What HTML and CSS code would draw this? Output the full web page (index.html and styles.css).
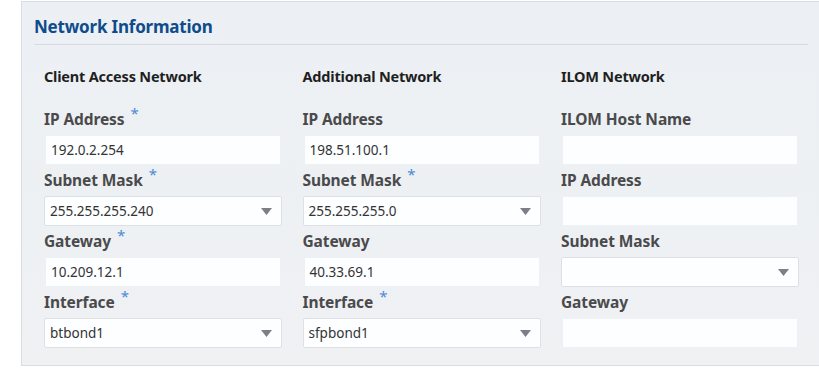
FILE: index.html
```html
<!DOCTYPE html>
<html>
<head>
<meta charset="utf-8">
<link rel="stylesheet" href="styles.css">
</head>
<body>
<section class="panel">
  <h2 class="panel-title">Network Information</h2>
  <div class="columns">
    <div class="col">
      <h3 class="col-title">Client Access Network</h3>
      <div class="field"><label class="lbl">IP Address<span class="req">*</span></label><div class="input">192.0.2.254</div></div>
      <div class="field"><label class="lbl">Subnet Mask<span class="req">*</span></label><div class="select"><span>255.255.255.240</span><svg class="arrow" width="11" height="7" viewBox="0 0 11 7"><path d="M0 0H11L5.5 7Z"/></svg></div></div>
      <div class="field"><label class="lbl">Gateway<span class="req">*</span></label><div class="input">10.209.12.1</div></div>
      <div class="field"><label class="lbl">Interface<span class="req">*</span></label><div class="select"><span>btbond1</span><svg class="arrow" width="11" height="7" viewBox="0 0 11 7"><path d="M0 0H11L5.5 7Z"/></svg></div></div>
    </div>
    <div class="col">
      <h3 class="col-title">Additional Network</h3>
      <div class="field"><label class="lbl">IP Address</label><div class="input">198.51.100.1</div></div>
      <div class="field"><label class="lbl">Subnet Mask<span class="req">*</span></label><div class="select"><span>255.255.255.0</span><svg class="arrow" width="11" height="7" viewBox="0 0 11 7"><path d="M0 0H11L5.5 7Z"/></svg></div></div>
      <div class="field"><label class="lbl">Gateway</label><div class="input">40.33.69.1</div></div>
      <div class="field"><label class="lbl">Interface<span class="req">*</span></label><div class="select"><span>sfpbond1</span><svg class="arrow" width="11" height="7" viewBox="0 0 11 7"><path d="M0 0H11L5.5 7Z"/></svg></div></div>
    </div>
    <div class="col">
      <h3 class="col-title">ILOM Network</h3>
      <div class="field"><label class="lbl">ILOM Host Name</label><div class="input"></div></div>
      <div class="field"><label class="lbl">IP Address</label><div class="input"></div></div>
      <div class="field"><label class="lbl">Subnet Mask</label><div class="select"><span></span><svg class="arrow" width="11" height="7" viewBox="0 0 11 7"><path d="M0 0H11L5.5 7Z"/></svg></div></div>
      <div class="field"><label class="lbl">Gateway</label><div class="input"></div></div>
    </div>
  </div>
</section>
</body>
</html>
```
FILE: styles.css
```css
html, body {
  margin: 0;
  padding: 0;
  background: #ffffff;
}
body {
  font-family: "Noto Sans", "Open Sans", Arial, sans-serif;
  width: 819px;
  height: 369px;
  overflow: hidden;
}
.panel {
  box-sizing: border-box;
  width: 798px;
  margin: 1px 0 0 21px;
  border: 1px solid #d8dde2;
  border-right: none;
  background: linear-gradient(#ecf0f4, #eff1f3);
  padding: 0 11px 12px 12px;
}
.panel-title {
  margin: 0;
  padding: 13px 0 5px 0;
  font-size: 17px;
  line-height: 24px;
  font-weight: bold;
  color: #0e4c8b;
  border-bottom: 1px solid #d6dbe0;
  letter-spacing: -0.2px;
}
.columns {
  display: grid;
  grid-template-columns: repeat(3, 238px);
  column-gap: 20.5px;
  padding-left: 10px;
}
.col-title {
  margin: 21px 0 23px 0;
  font-size: 14.5px;
  line-height: 20px;
  font-weight: bold;
  color: #1f1f22;
  letter-spacing: -0.2px;
}
.field {
  margin-bottom: 5px;
}
.lbl {
  display: block;
  font-size: 15.5px;
  line-height: 20px;
  padding-bottom: 6px;
  font-weight: bold;
  color: #4a4a4c;
  letter-spacing: -0.1px;
}
.req {
  color: #4d8ad6;
  font-weight: normal;
  font-size: 15px;
  margin-left: 6px;
  vertical-align: 6px;
  line-height: 0;
}
.input, .select {
  box-sizing: border-box;
  height: 30px;
  width: 238px;
  font-size: 13.5px;
  color: #333333;
  display: flex;
  align-items: center;
  padding-left: 5px;
}
.input {
  border: 1px solid #eef1f4;
  background: #fdfeff;
  border-width: 1px 2px;
}
.select {
  border: 1px solid #dde1e5;
  border-radius: 2px;
  background: #fdfeff;
  justify-content: space-between;
  padding-right: 9px;
}
.arrow {
  fill: #7b8086;
  display: block;
}
```
